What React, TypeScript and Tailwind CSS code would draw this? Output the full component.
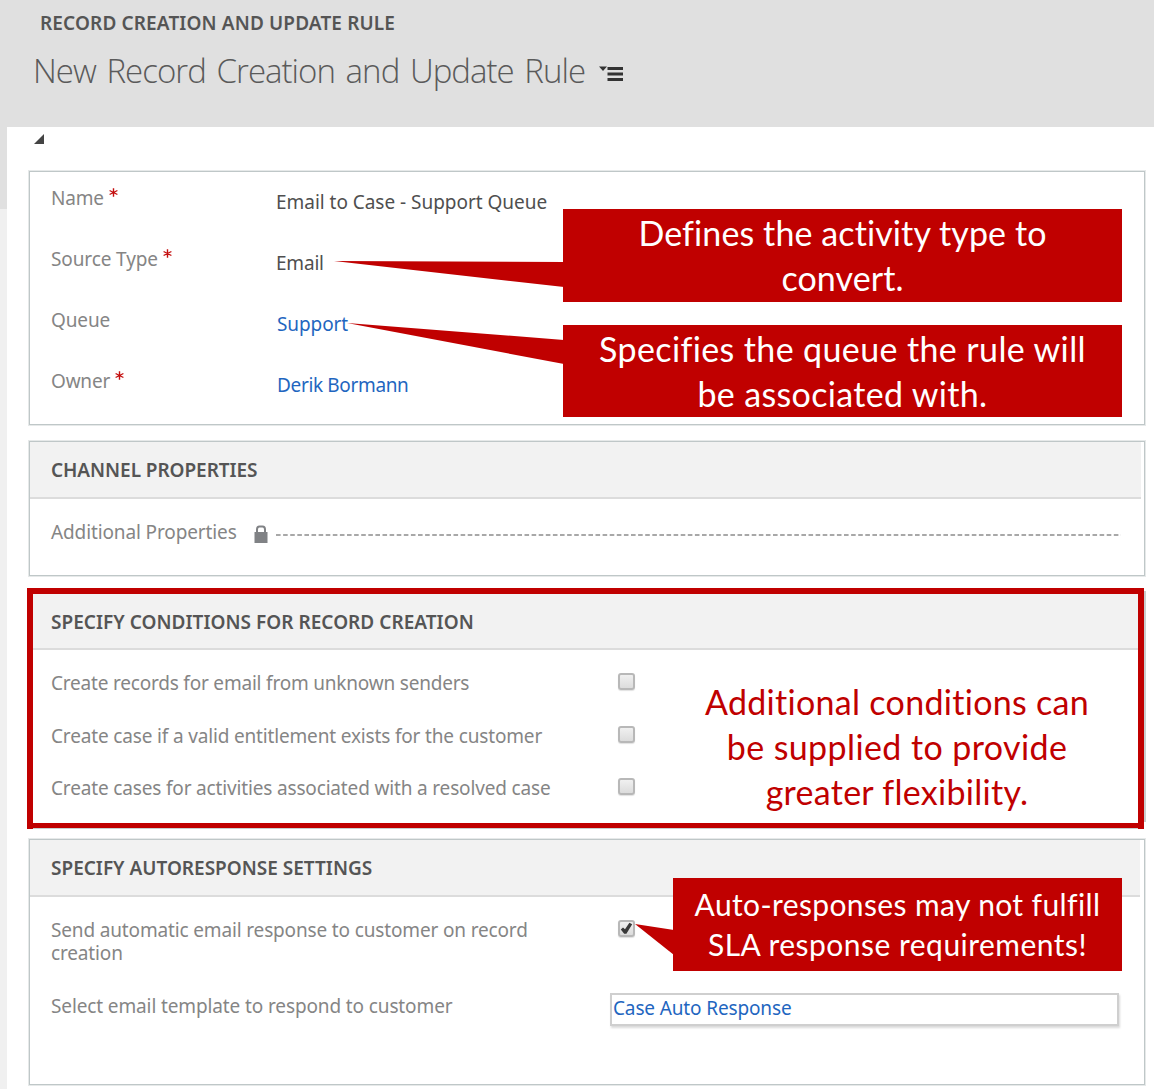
import type { ReactNode } from "react";

function Heading({ children, className = "" }: { children: ReactNode; className?: string }) {
  return (
    <div className={`flex shrink-0 items-center border-b-2 border-[#dcdcdc] bg-[#f2f2f2] pt-px text-[19px] font-semibold text-[#555] ${className}`}>
      {children}
    </div>
  );
}

function Checkbox({ checked = false }: { checked?: boolean }) {
  return (
    <span className="flex h-[17px] w-[17px] shrink-0 items-center justify-center rounded-[3px] border-2 border-[#b8b8b8] bg-linear-to-b from-[#f0f0f0] to-[#dcdcdc] shadow-[0_1px_1px_rgba(0,0,0,0.12)]">
      {checked && (
        <svg width="13" height="13" viewBox="0 0 13 13" className="shrink-0">
          <path d="M0.8 7.4 L3 5.4 L5 7.2 L9.4 0.8 L12.2 2.2 L6.4 11.8 L4.2 11.8 Z" fill="#3a3a3a" />
        </svg>
      )}
    </span>
  );
}

function Field({ label, required, tracking, children }: { label: string; required?: boolean; tracking: string; children: ReactNode }) {
  return (
    <div className="flex h-[61px] shrink-0">
      <div className="w-[224px] shrink-0 text-[#858585]">
        <span className={tracking}>{label}</span>
        {required && (
          <svg width="9" height="9" viewBox="0 0 9 9" className="mb-[8px] ml-[5px] inline-block align-baseline">
            <path d="M4.5 0.3V8.7M0.6 2.5L8.4 6.5M8.4 2.5L0.6 6.5" stroke="#c40f0f" strokeWidth="1.4" />
          </svg>
        )}
      </div>
      <div className="pt-[4px]">{children}</div>
    </div>
  );
}

function Condition({ label, tracking }: { label: string; tracking: string }) {
  return (
    <div className="flex h-[52.5px] shrink-0 items-start">
      <span className={`w-[567px] shrink-0 text-[#858585] ${tracking}`}>{label}</span>
      <div className="pt-[3px]">
        <Checkbox />
      </div>
    </div>
  );
}

const panel = "relative flex flex-col border border-[#bfc7c8] ring-1 ring-[#e6e9e9]";

export default function App() {
  return (
    <div className="flex h-[1089px] w-[1154px] flex-col overflow-hidden bg-white font-['Noto_Sans','Open_Sans',sans-serif] text-[19px] leading-[26px] whitespace-nowrap">
      <header className="h-[127px] shrink-0 bg-[#e0e0e0]">
        <div className="pt-[10px] pl-[40px] font-semibold tracking-[0.13px] text-[#555]">RECORD CREATION AND UPDATE RULE</div>
        <div className="flex items-center pt-[12px] pl-[33px]">
          <h1 className="w-[566px] font-['Open_Sans','Noto_Sans',sans-serif] text-[33px] leading-[46px] font-light tracking-[-0.97px] text-[#5a5a5a] [word-spacing:3px]">
            New Record Creation and Update Rule
          </h1>
          <svg width="25" height="18" viewBox="0 0 25 18" className="mt-[6px]">
            <path d="M0 1.5H8L4 6Z M8.5 2H24V5H8.5Z M8.5 7.5H24V10.5H8.5Z M8.5 13H24V16H8.5Z" fill="#333" />
          </svg>
        </div>
      </header>

      <div className="flex flex-1">
        <aside className="flex w-[7px] shrink-0 flex-col bg-[#f0f0f0]">
          <div className="h-[82px] bg-[#e0e0e0]" />
        </aside>

        <main className="flex w-[1147px] flex-col pr-[9px] pl-[22px]">
          <div className="h-[44px] shrink-0 pt-[7px] pl-[5px]">
            <svg width="10" height="10" viewBox="0 0 10 10">
              <path d="M10 0V10H0Z" fill="#444" />
            </svg>
          </div>

          <section className={`${panel} h-[254px] pt-[13px] pl-[21px]`}>
            <Field label="Name" required tracking="tracking-[-0.2px]">
              <span className="pl-px tracking-[-0.03px] text-[#4f4f4f]">Email to Case - Support Queue</span>
            </Field>
            <Field label="Source Type" required tracking="tracking-[-0.12px]">
              <span className="pl-px tracking-[-0.2px] text-[#4f4f4f]">Email</span>
            </Field>
            <Field label="Queue" tracking="tracking-[-0.12px]">
              <a className="pl-[2px] tracking-[-0.1px] text-[#1f66c0]">Support</a>
            </Field>
            <Field label="Owner" required tracking="tracking-[-0.2px]">
              <a className="pl-[2px] tracking-[-0.35px] text-[#1f66c0]">Derik Bormann</a>
            </Field>

            <div className="absolute top-[37px] right-[22px] flex h-[93px] w-[559px] flex-col items-center bg-[#c00000] pt-px font-['Lato',sans-serif] text-[34px] leading-[45px] text-white">
              <div className="tracking-[0.1px] [font-variant-ligatures:none]">Defines the activity type to</div>
              <div className="tracking-[0.1px]">convert.</div>
              <svg width="230" height="27" viewBox="0 0 230 27" className="absolute top-[52px] right-[558px]">
                <path d="M0 0L230 1V26Z" fill="#c00000" />
              </svg>
            </div>
            <div className="absolute top-[153px] right-[22px] flex h-[92px] w-[559px] flex-col items-center bg-[#c00000] pt-px font-['Lato',sans-serif] text-[34px] leading-[45px] text-white">
              <div className="tracking-[0.38px]">Specifies the queue the rule will</div>
              <div className="tracking-[0.34px]">be associated with.</div>
              <svg width="217" height="42" viewBox="0 0 217 42" className="absolute top-[-2px] right-[558px]">
                <path d="M0 0L217 17V41Z" fill="#c00000" />
              </svg>
            </div>
          </section>

          <section className={`${panel} mt-[16px] h-[135px]`}>
            <Heading className="mr-[3px] h-[57px] pl-[21px] tracking-[-0.06px]">CHANNEL PROPERTIES</Heading>
            <div className="flex items-center pt-[20px] pl-[21px]">
              <span className="w-[203px] tracking-[-0.12px] text-[#858585]">Additional Properties</span>
              <svg width="14" height="18" viewBox="0 0 14 18" className="mt-[3px]">
                <path d="M3 8V4.5Q3 1.5 5.5 1.5H8.5Q11 1.5 11 4.5V8" fill="none" stroke="#808285" strokeWidth="2" />
                <rect x="0.5" y="7" width="13" height="11" fill="#808285" />
              </svg>
              <svg width="845" height="2" viewBox="0 0 845 2" className="mt-[5px] ml-[8px]">
                <path d="M0 1H845" stroke="#8c8c8c" strokeWidth="1.6" strokeDasharray="4.6 2.5" />
              </svg>
            </div>
          </section>

          <section className="relative mt-[12px] mr-[1px] ml-[-2px] flex h-[241px] flex-col border-6 border-[#c00000]">
            <Heading className="h-[56px] pl-[18px] tracking-[0.03px]">SPECIFY CONDITIONS FOR RECORD CREATION</Heading>
            <div className="flex flex-1 flex-col border-b border-[#c9cece] pt-[20px] pl-[18px]">
              <Condition label="Create records for email from unknown senders" tracking="tracking-[-0.2px]" />
              <Condition label="Create case if a valid entitlement exists for the customer" tracking="tracking-[-0.16px]" />
              <Condition label="Create cases for activities associated with a resolved case" tracking="tracking-[-0.16px]" />
            </div>
            <div className="absolute top-[-3px] right-[-8px] h-[231px] w-[2px] bg-[#c9cece]" />
            <div className="absolute top-[85px] right-[36px] flex w-[410px] flex-col items-center font-['Lato',sans-serif] text-[34px] leading-[45px] text-[#c00000]">
              <div className="tracking-[0.3px]">Additional conditions can</div>
              <div className="tracking-[0.4px]">be supplied to provide</div>
              <div className="tracking-[0.28px]">greater flexibility.</div>
            </div>
          </section>

          <section className={`${panel} mt-[10px] h-[246px]`}>
            <Heading className="mr-[4px] h-[57px] pl-[21px]">SPECIFY AUTORESPONSE SETTINGS</Heading>
            <div className="flex h-[76px] items-start pt-[22px] pl-[21px]">
              <div className="w-[567px] shrink-0 leading-[23px] tracking-[-0.15px] text-[#858585]">
                Send automatic email response to customer on record
                <br />
                creation
              </div>
              <div className="pt-px">
                <Checkbox checked />
              </div>
            </div>
            <div className="flex items-start pt-[20px] pl-[21px]">
              <span className="w-[559px] shrink-0 tracking-[-0.12px] text-[#858585]">Select email template to respond to customer</span>
              <div className="h-[33px] w-[509px] border-2 border-[#cfcfcf] pl-px tracking-[-0.14px] text-[#1f66c0] shadow-[1px_2px_2px_rgba(0,0,0,0.15)]">
                Case Auto Response
              </div>
            </div>

            <div className="absolute top-[38px] right-[22px] flex h-[93px] w-[449px] flex-col items-center bg-[#c00000] pt-[6px] font-['Lato',sans-serif] text-[30px] leading-[40px] text-white">
              <div className="tracking-[0.38px]">Auto-responses may not fulfill</div>
              <div className="tracking-[0.48px]">SLA response requirements!</div>
              <svg width="39" height="31" viewBox="0 0 39 31" className="absolute top-[46px] right-[448px]">
                <path d="M0 0L39 6V31Z" fill="#c00000" />
              </svg>
            </div>
          </section>
        </main>
      </div>
    </div>
  );
}
